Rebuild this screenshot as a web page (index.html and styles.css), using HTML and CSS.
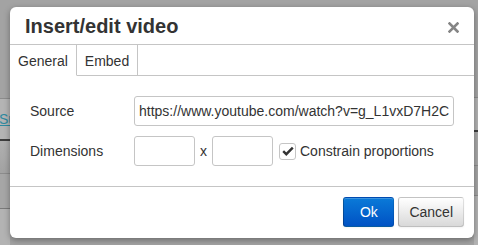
FILE: index.html
```html
<!DOCTYPE html>
<html>
<head>
<meta charset="utf-8">
<link rel="stylesheet" href="styles.css">
</head>
<body>
<div class="page">
  <div class="strip strip-left">
    <div class="band b-top"></div>
    <div class="line l-mid"></div>
    <div class="band b-link"><a class="link">Su</a></div>
    <div class="line l-dark2"></div>
    <div class="band b-a"></div>
    <div class="line l-mid"></div>
    <div class="band b-b"></div>
    <div class="line l-mid2"></div>
    <div class="band b-c"></div>
  </div>
  <div class="spacer"></div>
  <div class="strip strip-right">
    <div class="band r-top"></div>
    <div class="line l-mid"></div>
    <div class="band r-a"></div>
    <div class="line l-dark2"></div>
    <div class="band r-b"></div>
    <div class="line l-mid"></div>
    <div class="band r-c"></div>
    <div class="line l-mid"></div>
    <div class="band r-d"></div>
  </div>
</div>

<div class="dialog">
  <div class="head">
    <div class="title">Insert/edit video</div>
    <svg class="close" width="11" height="11" viewBox="0 0 11 11"><path d="M1.5 1.5 L9.5 9.5 M9.5 1.5 L1.5 9.5" stroke="#858585" stroke-width="2.6" stroke-linecap="square"/></svg>
  </div>
  <div class="tabs">
    <div class="tab active">General</div>
    <div class="tab">Embed</div>
  </div>
  <div class="panel">
    <div class="row">
      <label class="lbl">Source</label>
      <input class="field wide" type="text" value="https://www.youtube.com/watch?v=g_L1vxD7H2C8">
    </div>
    <div class="row">
      <label class="lbl">Dimensions</label>
      <input class="field small" type="text" value="">
      <span class="by">x</span>
      <input class="field small" type="text" value="">
      <span class="check">
        <svg width="12" height="10" viewBox="0 0 12 10"><path d="M1.2 5.2 L4.3 8.2 L10.8 1.6" fill="none" stroke="#333" stroke-width="2.4"/></svg>
      </span>
      <span class="check-label">Constrain proportions</span>
    </div>
  </div>
  <div class="foot">
    <button class="btn primary">Ok</button>
    <button class="btn">Cancel</button>
  </div>
</div>
</body>
</html>
```
FILE: styles.css
```css
* { box-sizing: border-box; }
html, body { margin: 0; padding: 0; }
body {
  width: 478px;
  height: 245px;
  overflow: hidden;
  background: #a3a3a3;
  font-family: "Liberation Sans", Arial, sans-serif;
  position: relative;
}
.page {
  display: flex;
  height: 245px;
}
.strip { display: flex; flex-direction: column; }
.strip-left { width: 10px; }
.strip-right { width: 4px; }
.spacer { flex: 1; }
.band { flex: none; }
.line { height: 1px; background: #8c8c8c; flex: none; }
.l-dark2 { height: 2px; background: #3e3e3e; }
.l-mid2 { background: #7a7a7a; }
.b-top { height: 98px; background: #a3a3a3; }
.b-link { height: 40px; background: #b4b4b4; padding-top: 13px; }
.link {
  display: block;
  font-size: 14px;
  line-height: 14px;
  color: #2f8aa0;
  text-decoration: underline;
  margin-left: -1px;
  white-space: nowrap;
}
.b-a { height: 32px; background: linear-gradient(#b0b0b0, #a2a2a2); }
.b-b { height: 34px; background: #a6a6a6; }
.b-c { height: 38px; background: #b3b3b3; }
.r-top { height: 97px; background: #a3a3a3; }
.r-a { height: 32px; background: #b2b2b2; }
.r-b { height: 33px; background: #a8a8a8; }
.r-c { height: 29px; background: #a4a4a4; }
.r-d { height: 50px; background: #b3b3b3; }

.dialog {
  position: absolute;
  left: 10px;
  top: 7px;
  width: 464px;
  height: 231px;
  background: #fff;
  border-radius: 6px;
  box-shadow: 0 2px 6px rgba(0,0,0,0.35);
  display: flex;
  flex-direction: column;
  overflow: hidden;
  color: #333;
  z-index: 1;
}
.head {
  height: 38px;
  border-bottom: 1px solid #c5c5c5;
  display: flex;
  align-items: center;
  justify-content: space-between;
  padding: 0 15px 0 15px;
  flex: none;
}
.title {
  font-size: 20px;
  font-weight: bold;
  color: #333;
  line-height: 20px;
}
.close { display: block; margin-top: 3px; }
.tabs {
  display: flex;
  height: 31px;
  border-bottom: 1px solid #c5c5c5;
  flex: none;
}
.tab {
  height: 31px;
  line-height: 31px;
  padding: 1px 8px 0 8px;
  font-size: 14px;
  color: #333;
  border-right: 1px solid #c5c5c5;
  border-bottom: 1px solid #c5c5c5;
  background: #fff;
}
.tab.active { border-bottom-color: #fff; }
.panel {
  padding: 20px 20px 0 20px;
  display: flex;
  flex-direction: column;
  gap: 10px;
  height: 110px;
  flex: none;
}
.row {
  display: flex;
  align-items: center;
  height: 30px;
}
.lbl {
  width: 104px;
  font-size: 14px;
  color: #333;
  flex: none;
}
.field {
  height: 30px;
  border: 1px solid #c5c5c5;
  border-radius: 3px;
  padding: 0 4px;
  font-family: "Liberation Sans", Arial, sans-serif;
  font-size: 14px;
  color: #333;
  background: #fff;
  outline: none;
  margin: 0;
}
.wide { width: 320px; }
.small { width: 61px; }
.by {
  font-size: 14px;
  width: 17px;
  text-align: center;
  color: #333;
}
.check {
  margin-left: 6px;
  width: 17px;
  height: 17px;
  border: 1px solid #c5c5c5;
  border-radius: 3px;
  display: flex;
  align-items: center;
  justify-content: center;
  background: #fff;
}
.check svg { display: block; }
.check-label {
  margin-left: 4px;
  font-size: 14px;
  color: #333;
}
.foot {
  flex: 1;
  border-top: 1px solid #c5c5c5;
  display: flex;
  justify-content: flex-end;
  align-items: flex-start;
  padding: 10px 10px 0 0;
  gap: 4px;
}
.btn {
  height: 30px;
  padding: 0 10px;
  font-family: "Liberation Sans", Arial, sans-serif;
  font-size: 14px;
  color: #333;
  border: 1px solid #b1b1b1;
  border-color: rgba(0,0,0,0.1) rgba(0,0,0,0.1) rgba(0,0,0,0.25) rgba(0,0,0,0.25);
  border-radius: 3px;
  background: linear-gradient(#ffffff, #d9d9d9);
  box-shadow: inset 0 1px 0 rgba(255,255,255,0.2), 0 1px 2px rgba(0,0,0,0.05);
  margin: 0;
}
.btn.primary {
  width: 51px;
  color: #fff;
  background: linear-gradient(#0a7ad8, #0052c4);
  border-color: rgba(0,0,0,0.1) rgba(0,0,0,0.1) rgba(0,0,0,0.25) rgba(0,0,0,0.25);
}
```
